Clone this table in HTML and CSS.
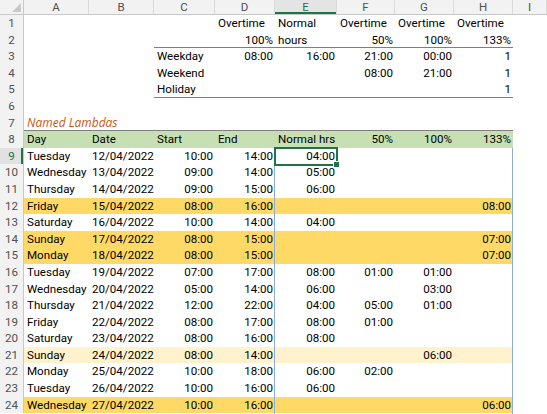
FILE: index.html
```html
<!DOCTYPE html>
<html>
<head>
<meta charset="utf-8">
<link rel="stylesheet" href="styles.css">
</head>
<body>
<div class="sheet">
  <div class="row colhead">
    <div class="corner"><svg width="9" height="9" viewBox="0 0 9 9"><polygon points="9,0 9,9 0,9" fill="#c8c8c8"/></svg></div>
    <div>A</div><div>B</div><div>C</div><div>D</div><div class="selcol">E</div><div>F</div><div>G</div><div>H</div><div>I</div>
  </div>

  <div class="row"><div class="rh">1</div><div class="c"></div><div class="c"></div><div class="c"></div><div class="c">Overtime</div><div class="c">Normal</div><div class="c">Overtime</div><div class="c">Overtime</div><div class="c">Overtime</div><div class="ci"></div></div>
  <div class="row"><div class="rh">2</div><div class="c"></div><div class="c"></div><div class="c bb"></div><div class="c r bb">100%</div><div class="c bb">hours</div><div class="c r bb">50%</div><div class="c r bb">100%</div><div class="c r bb">133%</div><div class="ci"></div></div>
  <div class="row"><div class="rh">3</div><div class="c"></div><div class="c"></div><div class="c">Weekday</div><div class="c r">08:00</div><div class="c r">16:00</div><div class="c r">21:00</div><div class="c r">00:00</div><div class="c r">1</div><div class="ci"></div></div>
  <div class="row"><div class="rh">4</div><div class="c"></div><div class="c"></div><div class="c">Weekend</div><div class="c r"></div><div class="c r"></div><div class="c r">08:00</div><div class="c r">21:00</div><div class="c r">1</div><div class="ci"></div></div>
  <div class="row"><div class="rh">5</div><div class="c"></div><div class="c"></div><div class="c bb">Holiday</div><div class="c bb"></div><div class="c bb"></div><div class="c bb"></div><div class="c bb"></div><div class="c r bb">1</div><div class="ci"></div></div>
  <div class="row"><div class="rh">6</div><div class="c"></div><div class="c"></div><div class="c"></div><div class="c"></div><div class="c"></div><div class="c"></div><div class="c"></div><div class="c"></div><div class="ci"></div></div>
  <div class="row"><div class="rh">7</div><div class="c bb lambda">Named Lambdas</div><div class="c bb"></div><div class="c bb"></div><div class="c bb"></div><div class="c bb"></div><div class="c bb"></div><div class="c bb"></div><div class="c bb"></div><div class="ci"></div></div>
  <div class="row green"><div class="rh">8</div><div class="c">Day</div><div class="c">Date</div><div class="c">Start</div><div class="c">End</div><div class="c">Normal hrs</div><div class="c r">50%</div><div class="c r">100%</div><div class="c r">133%</div><div class="ci"></div></div>

  <div class="row"><div class="rh selrow">9</div><div class="c">Tuesday</div><div class="c">12/04/2022</div><div class="c r">10:00</div><div class="c r">14:00</div><div class="c r">04:00</div><div class="c r"></div><div class="c r"></div><div class="c r"></div><div class="ci"></div></div>
  <div class="row"><div class="rh">10</div><div class="c">Wednesday</div><div class="c">13/04/2022</div><div class="c r">09:00</div><div class="c r">14:00</div><div class="c r">05:00</div><div class="c r"></div><div class="c r"></div><div class="c r"></div><div class="ci"></div></div>
  <div class="row"><div class="rh">11</div><div class="c">Thursday</div><div class="c">14/04/2022</div><div class="c r">09:00</div><div class="c r">15:00</div><div class="c r">06:00</div><div class="c r"></div><div class="c r"></div><div class="c r"></div><div class="ci"></div></div>
  <div class="row orange"><div class="rh">12</div><div class="c">Friday</div><div class="c">15/04/2022</div><div class="c r">08:00</div><div class="c r">16:00</div><div class="c r"></div><div class="c r"></div><div class="c r"></div><div class="c r">08:00</div><div class="ci"></div></div>
  <div class="row"><div class="rh">13</div><div class="c">Saturday</div><div class="c">16/04/2022</div><div class="c r">10:00</div><div class="c r">14:00</div><div class="c r">04:00</div><div class="c r"></div><div class="c r"></div><div class="c r"></div><div class="ci"></div></div>
  <div class="row orange"><div class="rh">14</div><div class="c">Sunday</div><div class="c">17/04/2022</div><div class="c r">08:00</div><div class="c r">15:00</div><div class="c r"></div><div class="c r"></div><div class="c r"></div><div class="c r">07:00</div><div class="ci"></div></div>
  <div class="row orange"><div class="rh">15</div><div class="c">Monday</div><div class="c">18/04/2022</div><div class="c r">08:00</div><div class="c r">15:00</div><div class="c r"></div><div class="c r"></div><div class="c r"></div><div class="c r">07:00</div><div class="ci"></div></div>
  <div class="row"><div class="rh">16</div><div class="c">Tuesday</div><div class="c">19/04/2022</div><div class="c r">07:00</div><div class="c r">17:00</div><div class="c r">08:00</div><div class="c r">01:00</div><div class="c r">01:00</div><div class="c r"></div><div class="ci"></div></div>
  <div class="row"><div class="rh">17</div><div class="c">Wednesday</div><div class="c">20/04/2022</div><div class="c r">05:00</div><div class="c r">14:00</div><div class="c r">06:00</div><div class="c r"></div><div class="c r">03:00</div><div class="c r"></div><div class="ci"></div></div>
  <div class="row"><div class="rh">18</div><div class="c">Thursday</div><div class="c">21/04/2022</div><div class="c r">12:00</div><div class="c r">22:00</div><div class="c r">04:00</div><div class="c r">05:00</div><div class="c r">01:00</div><div class="c r"></div><div class="ci"></div></div>
  <div class="row"><div class="rh">19</div><div class="c">Friday</div><div class="c">22/04/2022</div><div class="c r">08:00</div><div class="c r">17:00</div><div class="c r">08:00</div><div class="c r">01:00</div><div class="c r"></div><div class="c r"></div><div class="ci"></div></div>
  <div class="row"><div class="rh">20</div><div class="c">Saturday</div><div class="c">23/04/2022</div><div class="c r">08:00</div><div class="c r">16:00</div><div class="c r">08:00</div><div class="c r"></div><div class="c r"></div><div class="c r"></div><div class="ci"></div></div>
  <div class="row light"><div class="rh">21</div><div class="c">Sunday</div><div class="c">24/04/2022</div><div class="c r">08:00</div><div class="c r">14:00</div><div class="c r"></div><div class="c r"></div><div class="c r">06:00</div><div class="c r"></div><div class="ci"></div></div>
  <div class="row"><div class="rh">22</div><div class="c">Monday</div><div class="c">25/04/2022</div><div class="c r">10:00</div><div class="c r">18:00</div><div class="c r">06:00</div><div class="c r">02:00</div><div class="c r"></div><div class="c r"></div><div class="ci"></div></div>
  <div class="row"><div class="rh">23</div><div class="c">Tuesday</div><div class="c">26/04/2022</div><div class="c r">10:00</div><div class="c r">16:00</div><div class="c r">06:00</div><div class="c r"></div><div class="c r"></div><div class="c r"></div><div class="ci"></div></div>
  <div class="row orange"><div class="rh">24</div><div class="c">Wednesday</div><div class="c">27/04/2022</div><div class="c r">10:00</div><div class="c r">16:00</div><div class="c r"></div><div class="c r"></div><div class="c r"></div><div class="c r">06:00</div><div class="ci"></div></div>

  <div class="spill"></div>
  <div class="selection"><div class="handle"></div></div>
</div>
</body>
</html>
```

FILE: styles.css
```css
html, body {
  margin: 0;
  padding: 0;
  background: #ffffff;
}

.sheet {
  position: relative;
  width: 547px;
  height: 414px;
  overflow: hidden;
  font-family: Roboto, "Liberation Sans", sans-serif;
  font-size: 11.6px;
  color: #000000;
  background: #ffffff;
}

.row {
  display: grid;
  grid-template-columns: 24px 65px 65px 61px 60px 62px 58px 59px 59px 1fr;
  height: 16.6px;
  line-height: 16.6px;
}

.colhead {
  height: 15px;
  line-height: 14px;
  box-sizing: border-box;
  background: #f2f2f2;
  border-bottom: 1px solid #c8c8c8;
  color: #505050;
  font-size: 11.5px;
  text-align: center;
}

.colhead > div {
  border-right: 1px solid #dadada;
}

.colhead .corner {
  border-right: 1px solid #c8c8c8;
  display: flex;
  align-items: flex-end;
  justify-content: flex-end;
  padding: 0 2px 2px 0;
}

.colhead .selcol {
  background: #e4e4e4;
  color: #217346;
  box-shadow: inset 0 -2px 0 #217346;
}

.rh {
  background: #f2f2f2;
  border-right: 1px solid #c8c8c8;
  color: #505050;
  text-align: center;
  font-size: 11.6px;
}

.rh.selrow {
  background: #e1e1e1;
  color: #217346;
  box-shadow: inset -2px 0 0 #217346;
}

.c {
  padding: 0 2px 0 3px;
  white-space: nowrap;
  overflow: visible;
}

.r {
  text-align: right;
}

.bb {
  box-shadow: inset 0 -1px 0 #7f7f7f;
}

.lambda {
  color: #c55a11;
  font-family: "Open Sans", Roboto, sans-serif;
  font-style: italic;
  font-size: 12px;
}

.green .c {
  background: #c6e0b4;
}

.orange .c {
  background: #ffd966;
}

.light .c {
  background: #fff2cc;
}

.spill {
  position: absolute;
  left: 274px;
  top: 148px;
  width: 239px;
  height: 280px;
  box-sizing: border-box;
  border-left: 1px solid #8eaadb;
  border-right: 1px solid #8eaadb;
  pointer-events: none;
}

.selection {
  position: absolute;
  left: 274px;
  top: 147px;
  width: 64px;
  height: 18.6px;
  box-sizing: border-box;
  border: 2px solid #217346;
}

.selection .handle {
  position: absolute;
  right: -4px;
  bottom: -4px;
  width: 5px;
  height: 5px;
  background: #217346;
  border: 1px solid #ffffff;
}
```
